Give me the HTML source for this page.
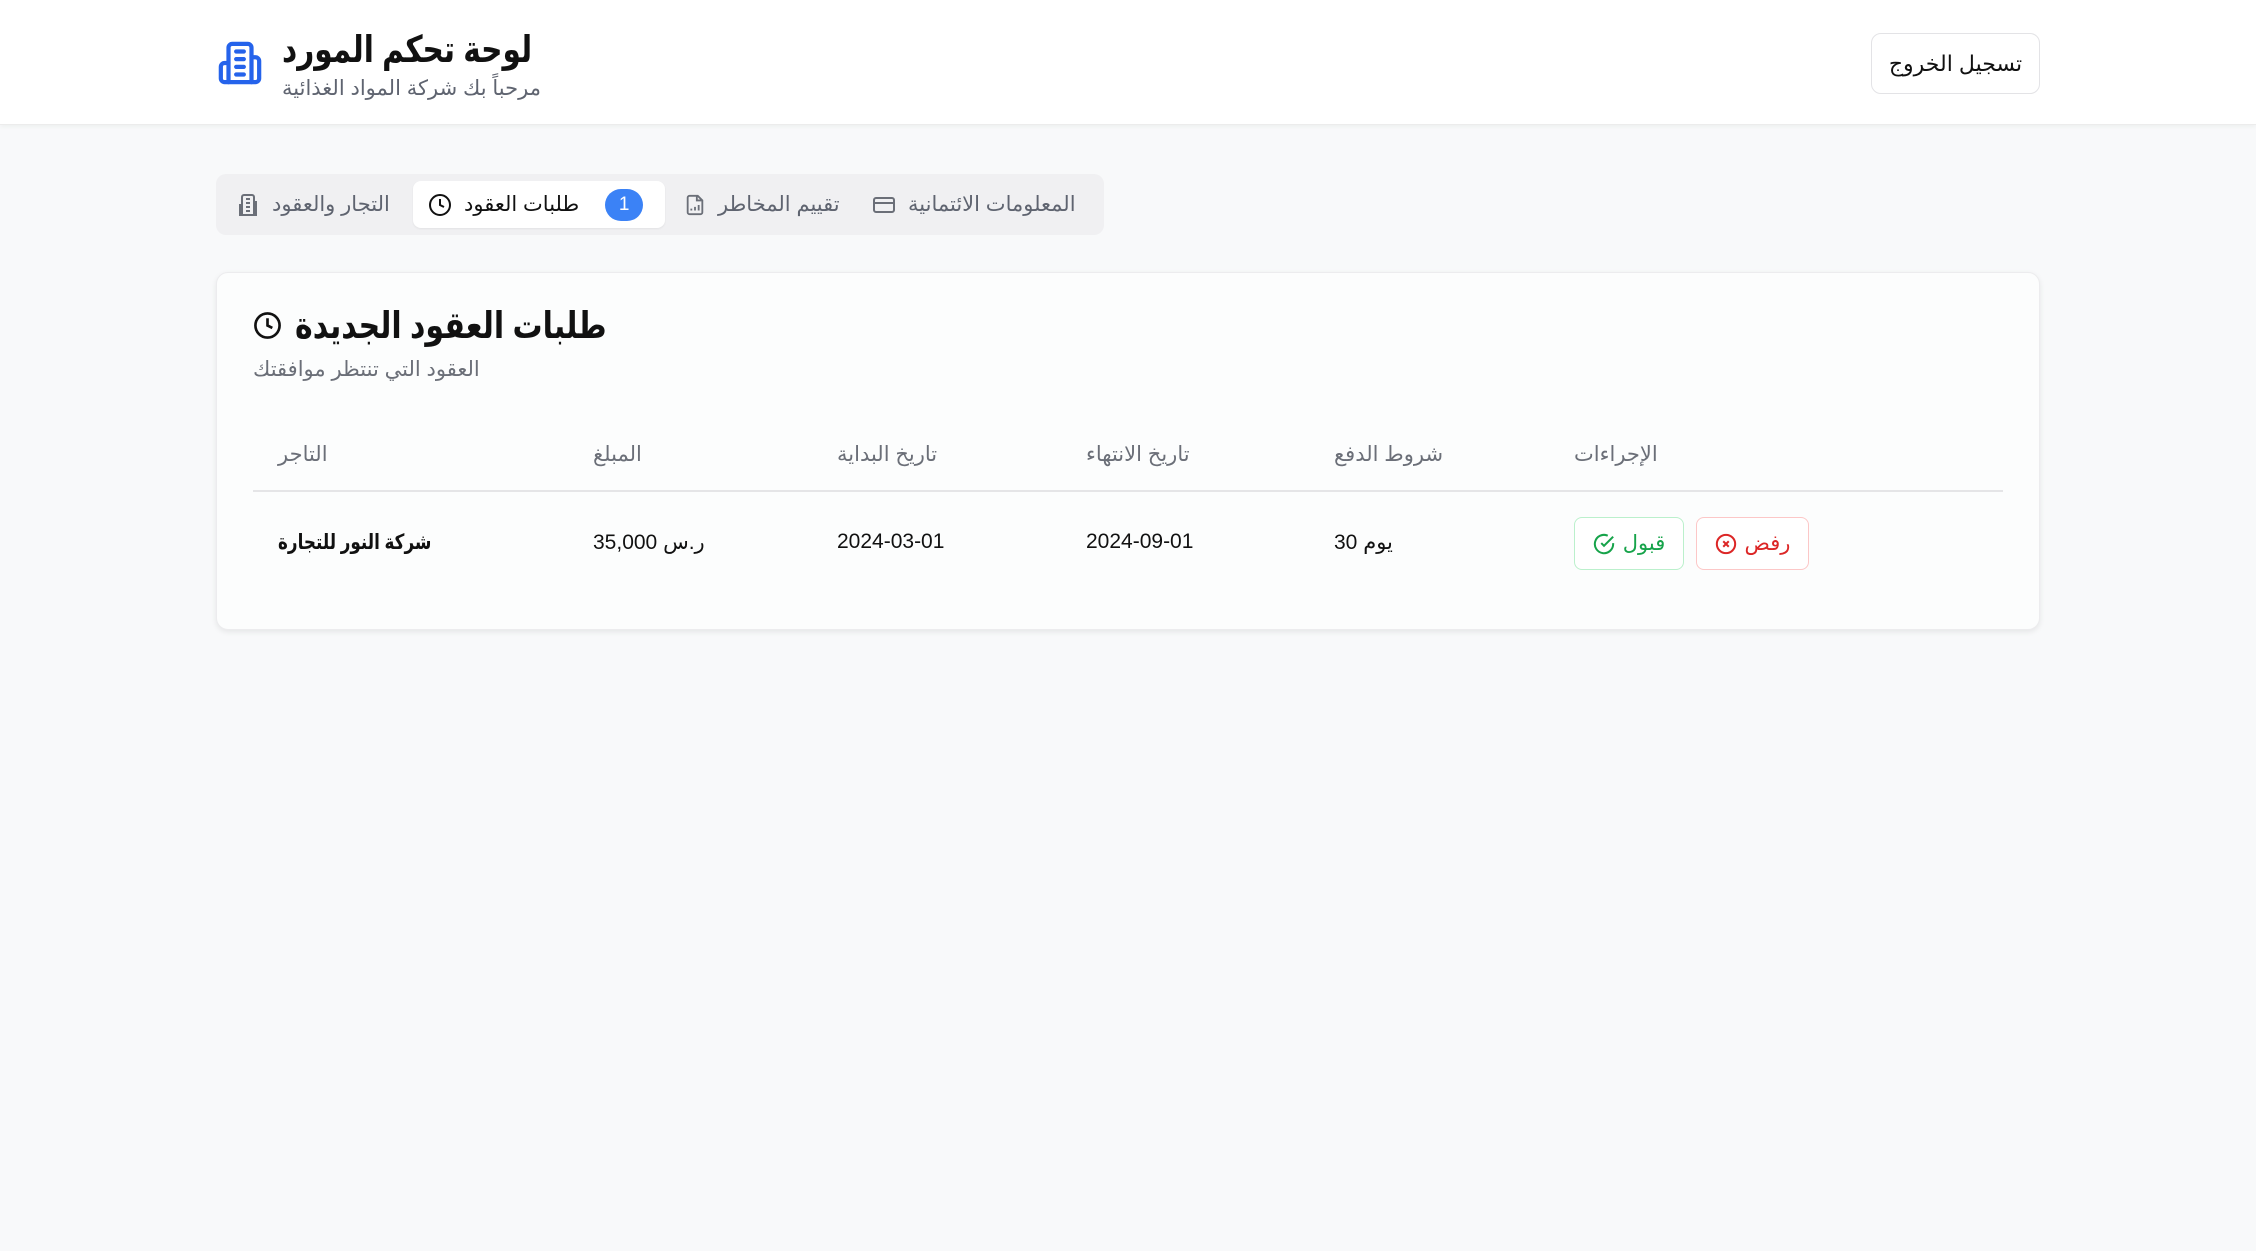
<!DOCTYPE html>
<html><head><meta charset="utf-8"><style>
*{box-sizing:border-box;margin:0;padding:0}
body{width:2256px;height:1251px;background:#f8f9fa;font-family:"Liberation Sans","DejaVu Sans","Noto Sans CJK SC",sans-serif;color:#111;overflow:hidden;position:relative}
.hdr{position:absolute;left:0;top:0;width:2256px;height:125px;background:#fff;border-bottom:1px solid #ececec;box-shadow:0 2px 4px rgba(0,0,0,.04)}
.abs{position:absolute;white-space:nowrap}
.sq{transform-origin:left center;display:inline-block}
.logout{position:absolute;left:1871px;top:33px;width:169px;height:61px;border:1px solid #e3e3e6;border-radius:10px;background:#fff;font-size:22px;display:flex;align-items:center;justify-content:center}
.tabs{position:absolute;left:216px;top:174px;width:888px;height:61px;background:#f0f0f2;border-radius:10px}
.tab{position:absolute;top:7px;height:47px;display:flex;align-items:center;gap:12px;font-size:21px;color:#5f6470}
.act{background:#fff;border-radius:8px;color:#111;box-shadow:0 1px 2px rgba(0,0,0,.06)}
.badge{width:38px;height:32px;border-radius:16px;background:#3b82f6;color:#fff;font-size:19px;display:flex;align-items:center;justify-content:center}
.card{position:absolute;left:216px;top:272px;width:1824px;height:358px;background:#fcfdfd;border:1px solid #ececee;border-radius:12px;box-shadow:0 2px 6px rgba(0,0,0,.08)}
.th{position:absolute;top:442px;font-size:21px;color:#6b6f78}
.td{position:absolute;top:530px;font-size:21px;color:#111}
.btn{position:absolute;top:517px;height:53px;border-radius:8px;display:flex;align-items:center;justify-content:center;gap:8px;font-size:21px;background:#fff}
</style></head><body>
<div class="hdr"></div>
<svg class="abs" style="left:217px;top:40px" width="46" height="46" viewBox="0 0 24 24" fill="none" stroke="#2563eb" stroke-width="2.2" stroke-linecap="round" stroke-linejoin="round"><path d="M6 22V4a2 2 0 0 1 2-2h8a2 2 0 0 1 2 2v18Z"/><path d="M6 12H4a2 2 0 0 0-2 2v6a2 2 0 0 0 2 2h2"/><path d="M18 9h2a2 2 0 0 1 2 2v9a2 2 0 0 1-2 2h-2"/><path d="M10 6h4M10 10h4M10 14h4M10 18h4"/></svg>
<div class="abs" style="left:282px;top:28px;font-size:37px;font-weight:bold;color:#111"><span class="sq" dir="rtl" style="transform:scaleX(.8)">لوحة تحكم المورد</span></div>
<div class="abs" dir="rtl" style="left:282px;top:76px;font-size:21px;color:#5f6470">مرحباً بك شركة المواد الغذائية</div>
<div class="logout" dir="rtl">تسجيل الخروج</div>

<div class="tabs">
 <div class="tab" style="left:20px">
  <svg width="24" height="24" viewBox="0 0 24 24" fill="none" stroke="#6b6f78" stroke-width="2"><path d="M6 22V4a2 2 0 0 1 2-2h8a2 2 0 0 1 2 2v18Z"/><path d="M6 12H4v10h2M18 9h2v13h-2M10 6h4M10 10h4M10 14h4M10 18h4"/></svg>
  <span dir="rtl">التجار والعقود</span></div>
 <div class="tab act" style="left:197px;width:252px;padding-left:15px">
  <svg width="24" height="24" viewBox="0 0 24 24" fill="none" stroke="#111" stroke-width="2"><circle cx="12" cy="12" r="10"/><path d="M12 6v6l4 2"/></svg>
  <span dir="rtl">طلبات العقود</span><span class="badge" style="margin-left:14px">1</span></div>
 <div class="tab" style="left:468px">
  <svg width="22" height="24" viewBox="0 0 24 24" fill="none" stroke="#6b6f78" stroke-width="2"><path d="M15 2H6a2 2 0 0 0-2 2v16a2 2 0 0 0 2 2h12a2 2 0 0 0 2-2V7Z"/><path d="M14 2v5h5M8 18v-2M12 18v-4M16 18v-6"/></svg>
  <span dir="rtl">تقييم المخاطر</span></div>
 <div class="tab" style="left:656px">
  <svg width="24" height="24" viewBox="0 0 24 24" fill="none" stroke="#6b6f78" stroke-width="2"><rect x="2" y="5" width="20" height="14" rx="2"/><path d="M2 10h20"/></svg>
  <span dir="rtl">المعلومات الائتمانية</span></div>
</div>

<div class="card"></div>
<svg class="abs" style="left:253px;top:311px" width="29" height="29" viewBox="0 0 24 24" fill="none" stroke="#111" stroke-width="2.2"><circle cx="12" cy="12" r="10"/><path d="M12 6v6l4 2"/></svg>
<div class="abs" style="left:295px;top:304px;font-size:37px;font-weight:bold"><span class="sq" dir="rtl" style="transform:scaleX(.81)">طلبات العقود الجديدة</span></div>
<div class="abs" dir="rtl" style="left:253px;top:357px;font-size:21px;color:#6b6f78">العقود التي تنتظر موافقتك</div>

<div class="th" style="left:278px" dir="rtl">التاجر</div>
<div class="th" style="left:593px" dir="rtl">المبلغ</div>
<div class="th" style="left:837px" dir="rtl">تاريخ البداية</div>
<div class="th" style="left:1086px" dir="rtl">تاريخ الانتهاء</div>
<div class="th" style="left:1334px" dir="rtl">شروط الدفع</div>
<div class="th" style="left:1574px" dir="rtl">الإجراءات</div>
<div class="abs" style="left:253px;top:490px;width:1750px;height:2px;background:#e5e5e7"></div>

<div class="td" style="left:278px;font-weight:bold"><span class="sq" dir="rtl" style="transform:scaleX(.8)">شركة النور للتجارة</span></div>
<div class="td" style="left:593px" dir="rtl">ر.س 35,000</div>
<div class="td" style="left:837px">2024-03-01</div>
<div class="td" style="left:1086px">2024-09-01</div>
<div class="td" style="left:1334px" dir="ltr">يوم 30</div>
<div class="btn" style="left:1574px;width:110px;border:1px solid #bbf0cc;color:#16a34a">
 <svg width="22" height="22" viewBox="0 0 24 24" fill="none" stroke="#16a34a" stroke-width="2.2"><path d="M22 11.1V12a10 10 0 1 1-5.9-9.1"/><path d="m9 11 3 3L22 4"/></svg><span dir="rtl">قبول</span></div>
<div class="btn" style="left:1696px;width:113px;border:1px solid #fcc7c7;color:#dc2626">
 <svg width="22" height="22" viewBox="0 0 24 24" fill="none" stroke="#dc2626" stroke-width="2.2"><circle cx="12" cy="12" r="10"/><path d="m15 9-6 6M9 9l6 6"/></svg><span dir="rtl">رفض</span></div>
</body></html>
